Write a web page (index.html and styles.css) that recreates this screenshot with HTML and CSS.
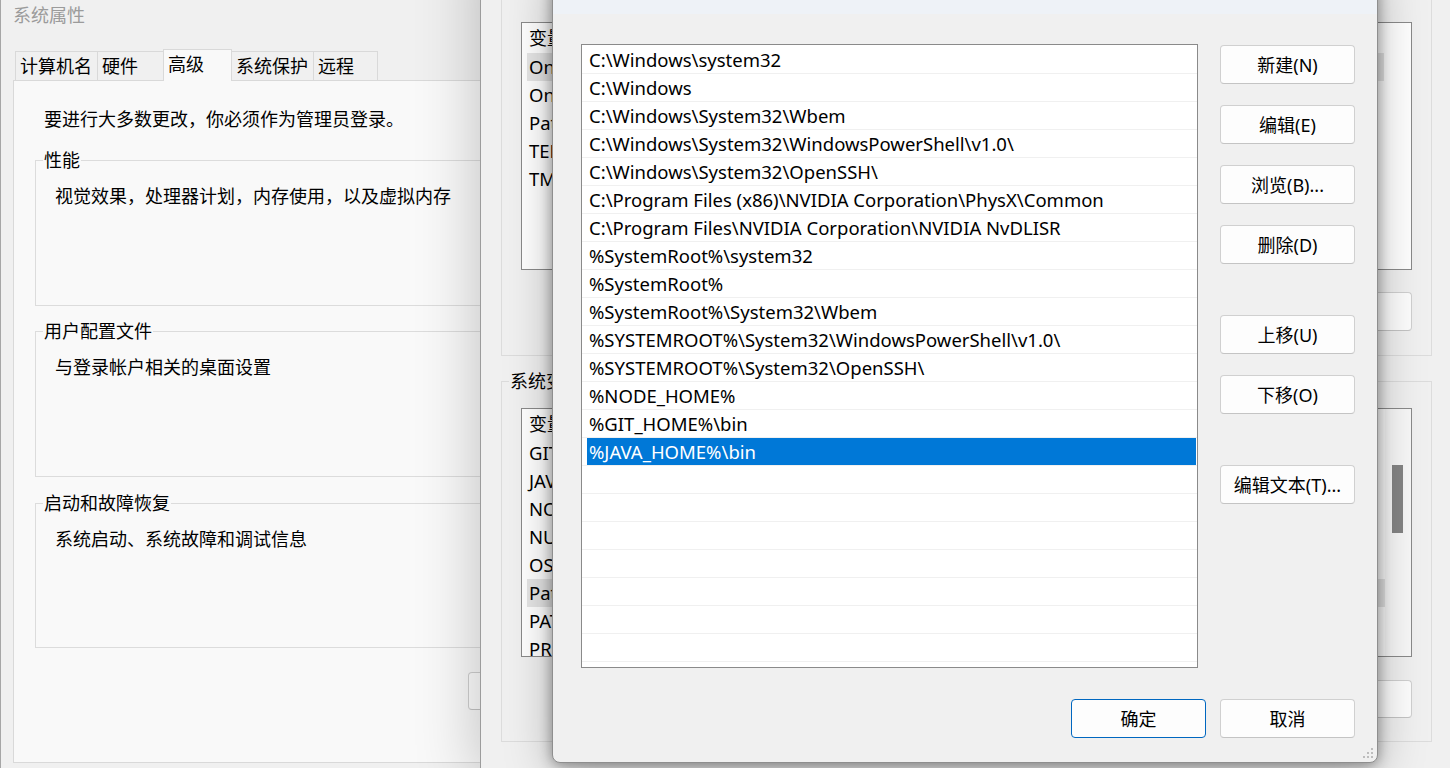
FILE: index.html
```html
<!DOCTYPE html>
<html lang="zh-CN">
<head>
<meta charset="utf-8">
<title>编辑环境变量</title>
<link rel="stylesheet" href="styles.css">
</head>
<body>
<div class="desktop">

  <section class="win sysprop">
    <header class="sp-title">系统属性</header>
    <nav class="tabs">
      <div class="tab t1">计算机名</div>
      <div class="tab t2">硬件</div>
      <div class="tab t3 active">高级</div>
      <div class="tab t4">系统保护</div>
      <div class="tab t5">远程</div>
    </nav>
    <div class="tabpanel">
      <p class="note">要进行大多数更改，你必须作为管理员登录。</p>
      <fieldset class="grp g1">
        <legend>性能</legend>
        <p>视觉效果，处理器计划，内存使用，以及虚拟内存</p>
      </fieldset>
      <fieldset class="grp g2">
        <legend>用户配置文件</legend>
        <p>与登录帐户相关的桌面设置</p>
      </fieldset>
      <fieldset class="grp g3">
        <legend>启动和故障恢复</legend>
        <p>系统启动、系统故障和调试信息</p>
      </fieldset>
      <div class="panel-foot"><button class="btn btn-env">环境变量(N)...</button></div>
    </div>
  </section>

  <section class="win envvars">
    <header class="ev-title">环境变量</header>
    <div class="ev-body">
      <fieldset class="evgrp g-user">
        <legend>Administrator 的用户变量(U)</legend>
        <div class="lv lv-user">
          <div class="lv-head"><span class="c1">变量</span><span class="c2">值</span></div>
          <div class="lv-row hl"><div class="cells"><span class="c1">OneDrive</span><span class="c2">C:\Users\Administrator\OneDrive</span></div></div>
          <div class="lv-row"><div class="cells"><span class="c1">OneDriveConsumer</span><span class="c2">C:\Users\Administrator\OneDrive</span></div></div>
          <div class="lv-row"><div class="cells"><span class="c1">Path</span><span class="c2">%USERPROFILE%\AppData\Local\Microsoft\WindowsApps;</span></div></div>
          <div class="lv-row"><div class="cells"><span class="c1">TEMP</span><span class="c2">%USERPROFILE%\AppData\Local\Temp</span></div></div>
          <div class="lv-row"><div class="cells"><span class="c1">TMP</span><span class="c2">%USERPROFILE%\AppData\Local\Temp</span></div></div>
        </div>
        <div class="ev-btns">
          <button class="btn">新建(N)...</button>
          <button class="btn">编辑(E)...</button>
          <button class="btn">删除(D)</button>
        </div>
      </fieldset>

      <fieldset class="evgrp g-sys">
        <legend>系统变量(S)</legend>
        <div class="lv lv-sys">
          <div class="lv-main">
            <div class="lv-head"><span class="c1">变量</span><span class="c2">值</span></div>
            <div class="lv-row"><div class="cells"><span class="c1">GIT_HOME</span><span class="c2">D:\Git</span></div></div>
            <div class="lv-row"><div class="cells"><span class="c1">JAVA_HOME</span><span class="c2">D:\Java\jdk</span></div></div>
            <div class="lv-row"><div class="cells"><span class="c1">NODE_HOME</span><span class="c2">D:\nodejs</span></div></div>
            <div class="lv-row"><div class="cells"><span class="c1">NUMBER_OF_PROCESSORS</span><span class="c2">16</span></div></div>
            <div class="lv-row"><div class="cells"><span class="c1">OS</span><span class="c2">Windows_NT</span></div></div>
            <div class="lv-row hl"><div class="cells"><span class="c1">Path</span><span class="c2">C:\Windows\system32;C:\Windows;</span></div></div>
            <div class="lv-row"><div class="cells"><span class="c1">PATHEXT</span><span class="c2">.COM;.EXE;.BAT;.CMD;.VBS</span></div></div>
            <div class="lv-row"><div class="cells"><span class="c1">PROCESSOR_ARCHITECTURE</span><span class="c2">AMD64</span></div></div>
          </div>
          <div class="lv-scroll"><div class="thumb"></div></div>
        </div>
        <div class="ev-btns">
          <button class="btn">新建(W)...</button>
          <button class="btn">编辑(I)...</button>
          <button class="btn">删除(L)</button>
        </div>
      </fieldset>
    </div>
  </section>

  <section class="win editdlg">
    <header class="dlg-title">编辑环境变量</header>
    <div class="dlg-body">
      <div class="dlg-main">
        <div class="pathlist">
          <div class="prow"><span>C:\Windows\system32</span></div>
          <div class="prow"><span>C:\Windows</span></div>
          <div class="prow"><span>C:\Windows\System32\Wbem</span></div>
          <div class="prow"><span>C:\Windows\System32\WindowsPowerShell\v1.0\</span></div>
          <div class="prow"><span>C:\Windows\System32\OpenSSH\</span></div>
          <div class="prow"><span>C:\Program Files (x86)\NVIDIA Corporation\PhysX\Common</span></div>
          <div class="prow"><span>C:\Program Files\NVIDIA Corporation\NVIDIA NvDLISR</span></div>
          <div class="prow"><span>%SystemRoot%\system32</span></div>
          <div class="prow"><span>%SystemRoot%</span></div>
          <div class="prow"><span>%SystemRoot%\System32\Wbem</span></div>
          <div class="prow"><span>%SYSTEMROOT%\System32\WindowsPowerShell\v1.0\</span></div>
          <div class="prow"><span>%SYSTEMROOT%\System32\OpenSSH\</span></div>
          <div class="prow"><span>%NODE_HOME%</span></div>
          <div class="prow"><span>%GIT_HOME%\bin</span></div>
          <div class="prow sel"><span>%JAVA_HOME%\bin</span></div>
          <div class="prow"><span></span></div>
          <div class="prow"><span></span></div>
          <div class="prow"><span></span></div>
          <div class="prow"><span></span></div>
          <div class="prow"><span></span></div>
          <div class="prow"><span></span></div>
          <div class="prow"><span></span></div>
        </div>
        <div class="side-btns">
          <button class="btn">新建(N)</button>
          <button class="btn">编辑(E)</button>
          <button class="btn">浏览(B)...</button>
          <button class="btn">删除(D)</button>
          <button class="btn gap-lg">上移(U)</button>
          <button class="btn">下移(O)</button>
          <button class="btn gap-lg">编辑文本(T)...</button>
        </div>
      </div>
      <div class="dlg-foot">
        <button class="btn primary">确定</button>
        <button class="btn">取消</button>
      </div>
    </div>
    <svg class="grip" width="12" height="12" viewBox="0 0 12 12" aria-hidden="true">
      <rect x="9" y="1" width="2" height="2"/>
      <rect x="5" y="5" width="2" height="2"/>
      <rect x="9" y="5" width="2" height="2"/>
      <rect x="1" y="9" width="2" height="2"/>
      <rect x="5" y="9" width="2" height="2"/>
      <rect x="9" y="9" width="2" height="2"/>
    </svg>
  </section>

</div>
</body>
</html>
```

FILE: styles.css
```css
* { box-sizing: border-box; }
html, body { margin: 0; padding: 0; }
body {
  width: 1450px;
  height: 768px;
  overflow: hidden;
  background: #f0f0f0;
  font-family: "Noto Sans", "Noto Sans CJK SC", sans-serif;
  font-size: 18px;
  color: #000;
}
p { margin: 0; }
.desktop { position: relative; width: 1450px; height: 768px; overflow: hidden; }
.win { position: absolute; }

.btn {
  height: 39px;
  width: 135px;
  padding: 0;
  border: 1px solid #d0d0d0;
  border-bottom-color: #c4c4c4;
  border-radius: 4px;
  background: #fdfdfd;
  font-family: inherit;
  font-size: 18px;
  color: #000;
  line-height: 1;
}
.btn.primary { border-color: #0067c0; }

/* ---------- System properties (back window) ---------- */
.sysprop {
  left: 0; top: 0;
  width: 640px; height: 768px;
  background: #f0f0f0;
  border-left: 1px solid #a6a6a6;
  display: flex;
  flex-direction: column;
}
.sp-title {
  height: 30px;
  line-height: 30px;
  padding-left: 12px;
  color: #9b9b9b;
}
.tabs {
  height: 50px;
  padding-left: 14px;
  display: flex;
  align-items: flex-end;
}
.tab {
  height: 29px;
  border: 1px solid #d9d9d9;
  border-bottom: none;
  margin-right: -1px;
  padding: 2px 0 0 4px;
  line-height: 24px;
  background: #f0f0f0;
  white-space: nowrap;
}
.tab.active {
  height: 32px;
  margin-bottom: -1px;
  background: #f9f9f9;
  position: relative;
  z-index: 1;
}
.t1 { width: 83px; }
.t2 { width: 67px; }
.t3 { width: 69px; }
.t4 { width: 83px; }
.t5 { width: 65px; }

.tabpanel {
  flex: 1;
  margin: 0 0 5px 12px;
  border: 1px solid #d9d9d9;
  background: #f9f9f9;
  padding: 0 0 0 21px;
}
.note { margin: 26px 0 0 9px; line-height: 24px; }
.grp {
  margin: 0;
  padding: 0;
  width: 570px;
  height: 158px;
  border: 1px solid #dcdcdc;
  min-width: 0;
}
.grp legend { margin-left: 7px; padding: 0 1px; line-height: 24px; }
.grp p { margin: 12px 0 0 19px; line-height: 24px; }
.g1 { margin-top: 17px; }
.g2 { margin-top: 13px; }
.g3 { margin-top: 14px; height: 157px; }
.panel-foot { margin: 24px 0 0 433px; }
.btn-env { width: 170px; height: 38px; }

/* ---------- Environment variables (middle window) ---------- */
.envvars {
  left: 480px; top: -60px;
  width: 1000px; height: 840px;
  background: #f0f0f0;
  border-left: 1px solid #9c9c9c;
  box-shadow: 0 0 60px rgba(0, 0, 0, 0.24);
  display: flex;
  flex-direction: column;
}
.ev-title { height: 30px; }
.ev-body { padding: 10px 0 0 20px; }
.evgrp {
  margin: 0;
  padding: 0;
  width: 931px;
  border: 1px solid #dcdcdc;
  min-width: 0;
}
.evgrp legend { margin-left: 7px; padding: 0 1px; line-height: 24px; }
.g-sys { margin-top: 13px; }
.lv {
  margin: 18px 0 0 19px;
  width: 891px;
  height: 248px;
  border: 1px solid #8a8a8a;
  background: #fff;
  overflow: hidden;
  font-size: 18.5px;
}
.lv-sys { margin-top: 15px; height: 249px; display: flex; }
.lv-main { flex: 1; min-width: 0; }
.lv-head { height: 30px; line-height: 30px; padding-left: 7px; display: flex; font-size: 18px; }
.lv-row { height: 28px; padding-left: 5px; }
.lv-user .lv-row { padding-right: 27px; }
.cells { height: 28px; line-height: 28px; padding-left: 2px; display: flex; white-space: nowrap; overflow: hidden; }
.lv-row.hl .cells { background: #e5e5e5; }
.c1 { width: 300px; flex: none; }
.c2 { flex: 1; min-width: 0; overflow: hidden; }
.lv-scroll { width: 26px; flex: none; background: #f8f8f8; padding: 56px 0 0 7px; }
.thumb { width: 11px; height: 68px; background: #858585; }
.ev-btns {
  display: flex;
  justify-content: flex-end;
  gap: 14px;
  margin: 22px 19px 24px 0;
}
.g-sys .ev-btns { margin: 23px 19px 23px 0; }
.g-sys .ev-btns .btn { height: 38px; }

/* ---------- Edit environment variable (front dialog) ---------- */
.editdlg {
  left: 552px; top: -32px;
  width: 826px; height: 795px;
  background: #f0f0f0;
  border: 1px solid #8e8e8e;
  border-radius: 8px;
  box-shadow: 0 2px 14px rgba(0, 0, 0, 0.38), 0 8px 48px rgba(0, 0, 0, 0.26);
  display: flex;
  flex-direction: column;
  overflow: hidden;
}
.dlg-title {
  height: 45px;
  line-height: 44px;
  padding-left: 14px;
  background: #eef2f7;
}
.dlg-body {
  flex: 1;
  display: flex;
  flex-direction: column;
  padding: 30px 22px 0 28px;
}
.dlg-main { display: flex; gap: 22px; }
.pathlist {
  width: 617px;
  height: 624px;
  flex: none;
  border: 1px solid #8a8a8a;
  background: #fff;
  padding-top: 1px;
  overflow: hidden;
  font-size: 18.5px;
}
.prow { height: 28px; border-bottom: 1px solid #f0f0f0; padding-left: 5px; }
.prow span {
  display: block;
  height: 27px;
  line-height: 28px;
  padding-left: 2px;
  margin-right: 1px;
  white-space: nowrap;
}
.prow.sel span { background: #0078d7; color: #fff; }
.side-btns { display: flex; flex-direction: column; width: 135px; padding-top: 1px; }
.side-btns .btn + .btn { margin-top: 21px; }
.side-btns .btn.gap-lg { margin-top: 51px; }
.dlg-foot { display: flex; justify-content: flex-end; gap: 14px; margin-top: 31px; }
.grip { position: absolute; right: 3px; bottom: 3px; fill: #bdbdbd; }
```
